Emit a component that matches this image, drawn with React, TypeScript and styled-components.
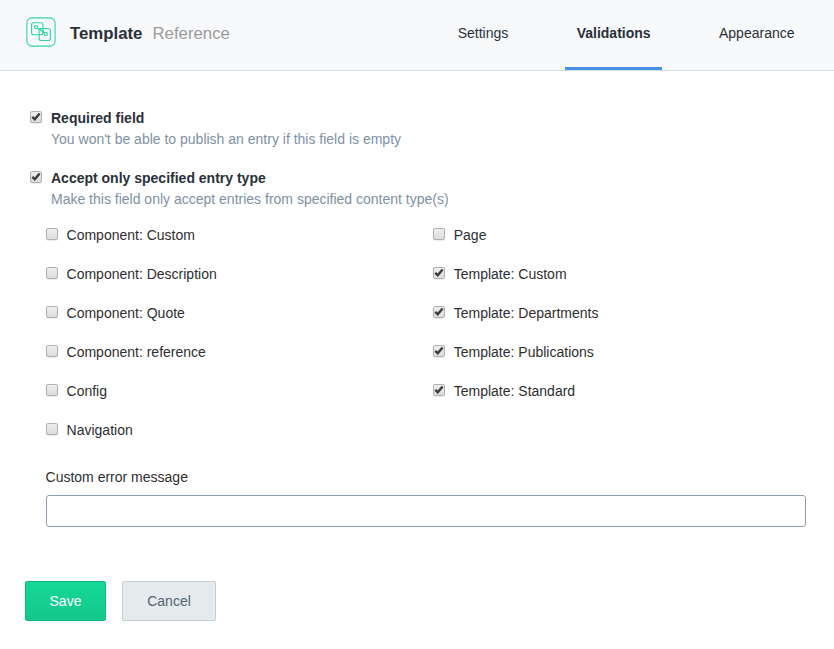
import React, { useState } from 'react';
import styled, { createGlobalStyle } from 'styled-components';

const GlobalStyle = createGlobalStyle`
  *, *::before, *::after { box-sizing: border-box; }
  body {
    margin: 0;
    background: #fff;
    color: #2d2f31;
    font: 14px/21px "Liberation Sans", Arial, sans-serif;
  }
`;

const Page = styled.div`
  width: 100%;
  height: 649px;
  overflow: hidden;
`;

const Header = styled.header`
  display: flex;
  justify-content: space-between;
  height: 71px;
  padding: 0 28px 0 26px;
  background: #f8f9fb;
  border-bottom: 1px solid #d3dce0;
`;

const Heading = styled.div`
  display: flex;
  height: 66px;
  align-items: center;
  font-size: 16.8px;
`;

const FieldIcon = styled.svg`
  width: 30px;
  height: 30px;
  margin: -2px 14px 0 0;
  fill: none;
  stroke: #2fd6a0;
  stroke-width: 1.1;
`;

const FieldName = styled.strong`
  margin-right: 10px;
  color: #2a3039;
`;

const FieldType = styled.span`
  color: #9b9b9b;
`;

const Tabs = styled.nav`
  display: flex;
  gap: 45.4px;
`;

const Tab = styled.a<{ $active?: boolean }>`
  height: 70px;
  padding: 23px 11.5px 0;
  color: #2a3039;
  font-weight: ${(p) => (p.$active ? 700 : 400)};
  border-bottom: 3px solid ${(p) => (p.$active ? '#4a90e2' : 'transparent')};
`;

const Content = styled.main`
  padding: 37px 28px 0 30px;
`;

const OptionLabel = styled.label`
  display: flex;
  align-items: flex-start;
  gap: 9px;
`;

const Box = styled.span`
  position: relative;
  flex: none;
  width: 12px;
  height: 12px;
  margin-top: 3px;
  border: 1px solid #b0b0b0;
  border-radius: 2px;
  background: linear-gradient(#eeeeee, #dcdcdc);
  box-shadow: 0 1px 1px rgba(0, 0, 0, 0.08);
`;

const NativeCheckbox = styled.input`
  position: absolute;
  inset: 0;
  margin: 0;
  opacity: 0;
`;

const Tick = styled.svg`
  display: block;
  width: 10px;
  height: 10px;
  fill: none;
  stroke: #3c3c3c;
  stroke-width: 2.4;
`;

const Validation = styled.section`
  margin-bottom: 18px;
`;

const ValidationTitle = styled.strong`
  color: #2a3039;
`;

const Help = styled.p`
  margin: 0 0 0 21px;
  color: #8091a5;
`;

const TypeGrid = styled.div`
  display: grid;
  grid-template: repeat(6, 21px) / 387.2px 1fr;
  grid-auto-flow: column;
  row-gap: 18px;
  margin: -3px 0 26px 15.55px;
`;

const MessageField = styled.label`
  display: block;
  margin-left: 15.55px;
`;

const MessageInput = styled.input`
  display: block;
  width: 100%;
  height: 32px;
  margin-top: 7px;
  padding: 0 10px;
  border: 1px solid #8f9dab;
  border-radius: 3px;
  font: inherit;
  outline: none;
`;

const Actions = styled.footer`
  display: flex;
  gap: 16px;
  padding: 54px 25px 0;
`;

const Button = styled.button<{ $primary?: boolean }>`
  width: ${(p) => (p.$primary ? 81 : 94)}px;
  height: 40px;
  padding: 0;
  border: 1px solid ${(p) => (p.$primary ? '#10b77f' : '#c3cfd5')};
  border-radius: 2px;
  background: ${(p) => (p.$primary ? 'linear-gradient(#16d997, #14c78a)' : '#e5ebed')};
  color: ${(p) => (p.$primary ? '#fff' : '#536171')};
  font: inherit;
`;

const contentTypes: [string, boolean][] = [
  ['Component: Custom', false],
  ['Component: Description', false],
  ['Component: Quote', false],
  ['Component: reference', false],
  ['Config', false],
  ['Navigation', false],
  ['Page', false],
  ['Template: Custom', true],
  ['Template: Departments', true],
  ['Template: Publications', true],
  ['Template: Standard', true],
];

function Option({ initial, children }: { initial: boolean; children: React.ReactNode }) {
  const [checked, setChecked] = useState(initial);
  return (
    <OptionLabel>
      <Box>
        {checked && (
          <Tick viewBox="0 0 10 10">
            <path d="M1.3 4.8 3.8 7.3 8.6 1.6" />
          </Tick>
        )}
        <NativeCheckbox type="checkbox" checked={checked} onChange={() => setChecked(!checked)} />
      </Box>
      <span>{children}</span>
    </OptionLabel>
  );
}

export default function App() {
  return (
    <Page>
      <GlobalStyle />
      <Header>
        <Heading>
          <FieldIcon viewBox="0 0 30 30">
            <rect x="0.9" y="0.9" width="28.2" height="28.2" rx="5" />
            <rect x="5.6" y="5.8" width="11.2" height="12" rx="2" />
            <rect x="13.1" y="11.5" width="11.3" height="12" rx="2" />
            <circle cx="10" cy="10.2" r="1.6" />
            <circle cx="19.8" cy="17" r="1.6" />
            <path d="m11.3 11.2 7.2 4.9M12.2 11.8l3.2.3M17.8 15.6l-1.4-2.6" />
          </FieldIcon>
          <FieldName>Template</FieldName>
          <FieldType>Reference</FieldType>
        </Heading>
        <Tabs>
          <Tab>Settings</Tab>
          <Tab $active>Validations</Tab>
          <Tab>Appearance</Tab>
        </Tabs>
      </Header>
      <Content>
        <Validation>
          <Option initial>
            <ValidationTitle>Required field</ValidationTitle>
          </Option>
          <Help>You won't be able to publish an entry if this field is empty</Help>
        </Validation>
        <Validation>
          <Option initial>
            <ValidationTitle>Accept only specified entry type</ValidationTitle>
          </Option>
          <Help>Make this field only accept entries from specified content type(s)</Help>
        </Validation>
        <TypeGrid>
          {contentTypes.map(([name, checked]) => (
            <Option key={name} initial={checked}>{name}</Option>
          ))}
        </TypeGrid>
        <MessageField>
          Custom error message
          <MessageInput type="text" />
        </MessageField>
      </Content>
      <Actions>
        <Button $primary>Save</Button>
        <Button>Cancel</Button>
      </Actions>
    </Page>
  );
}
